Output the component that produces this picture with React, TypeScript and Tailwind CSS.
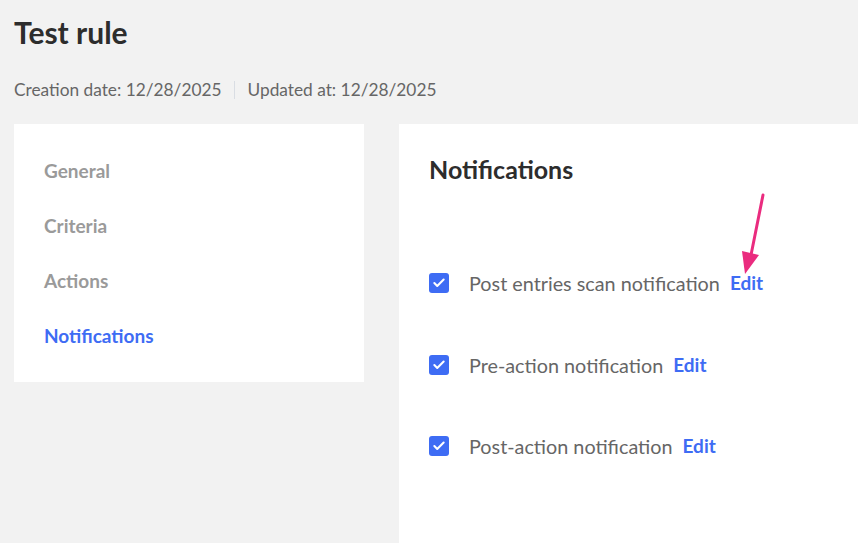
import { Check } from "lucide-react";

const navItems = ["General", "Criteria", "Actions", "Notifications"];
const notifications = [
  "Post entries scan notification",
  "Pre-action notification",
  "Post-action notification",
];

function App() {
  return (
    <div
      className="relative h-[543px] w-[858px] overflow-hidden bg-[#f2f2f2] pl-[14px] pt-[13px]"
      style={{ fontFamily: "Lato, 'Open Sans', sans-serif" }}
    >
      <h1 className="text-[30px] font-bold leading-[38px] text-[#2d2d2d]">Test rule</h1>
      <div className="mt-[27px] flex items-center text-[17.3px] leading-[24px] text-[#666]">
        <span>Creation date: 12/28/2025</span>
        <span className="ml-[12px] mr-[13px] h-[18px] w-px bg-[#d9dde3]" />
        <span>Updated at: 12/28/2025</span>
      </div>

      <div className="mt-[22px] flex items-start gap-[35px]">
        <nav className="flex h-[258px] w-[350px] flex-col bg-white px-[30px] pt-[34px]">
          {navItems.map((item) => (
            <div
              key={item}
              className={
                "h-[55px] text-[19px] font-bold leading-[26px] " +
                (item === "Notifications" ? "text-[#3e6cf4]" : "text-[#9a9a9a]")
              }
            >
              {item}
            </div>
          ))}
        </nav>

        <section className="h-[420px] flex-1 bg-white px-[30px] pt-[30px]">
          <h2 className="text-[25px] font-bold leading-[30px] text-[#2d2d2d]">Notifications</h2>
          <div className="mt-[86px] flex flex-col gap-[55.5px]">
            {notifications.map((label) => (
              <div key={label} className="flex h-[26px] items-center">
                <span className="flex h-[20px] w-[20px] items-center justify-center rounded-[3px] bg-[#3e6cf4]">
                  <Check size={14} strokeWidth={3.5} className="text-white" />
                </span>
                <span className="ml-[20px] text-[19.8px] leading-[26px] text-[#666]">{label}</span>
                <span className="ml-[10px] text-[19px] font-bold leading-[26px] text-[#3e6cf4]">Edit</span>
              </div>
            ))}
          </div>
        </section>
      </div>

      {/* annotation arrow pointing at the first Edit link */}
      <svg className="absolute left-[735px] top-[190px]" width="40" height="90" viewBox="0 0 40 90">
        <line x1="28" y1="5" x2="16" y2="65" stroke="#ea2c7f" strokeWidth="3" strokeLinecap="round" />
        <polygon points="7,61 24,65 10,84" fill="#ea2c7f" />
      </svg>
    </div>
  );
}

export default App;
